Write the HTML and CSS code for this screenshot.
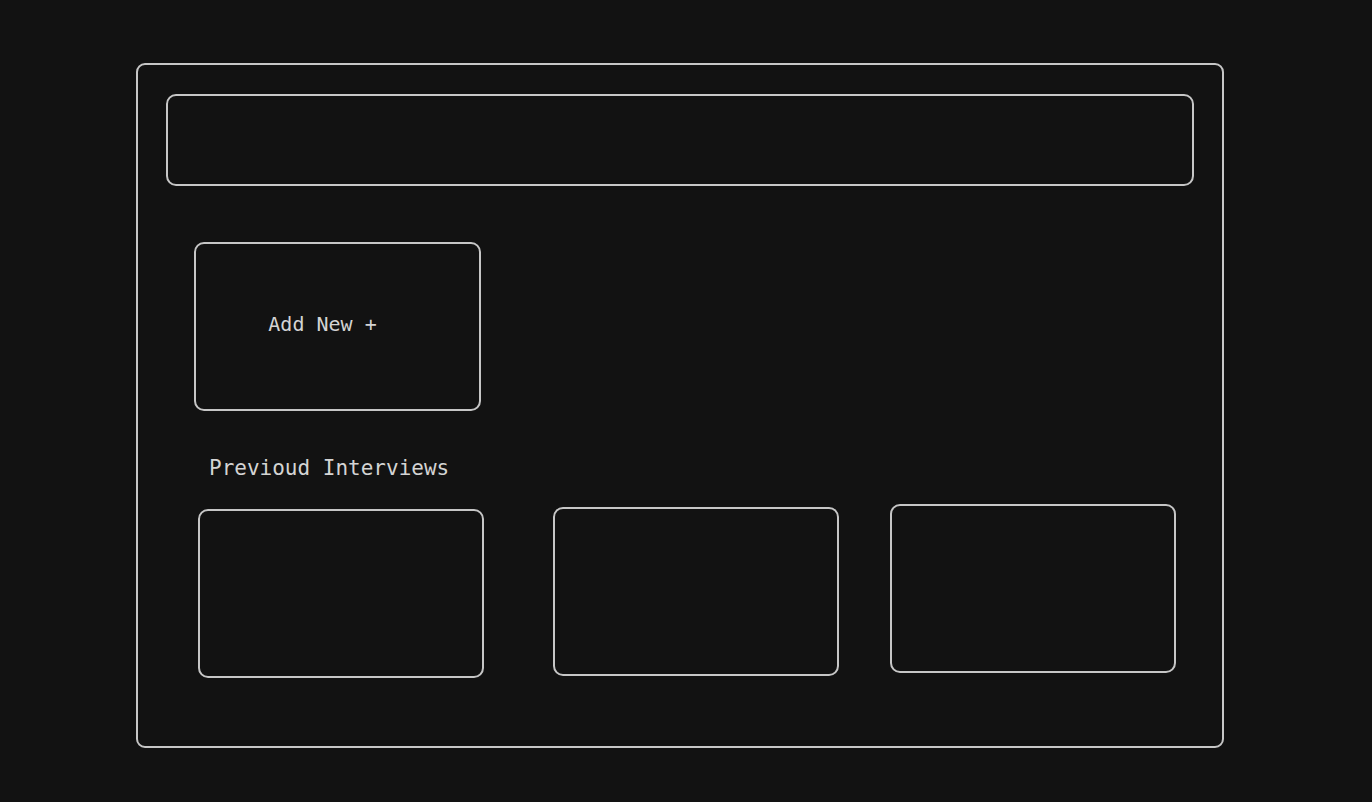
FILE: index.html
```html
<!DOCTYPE html>
<html>
<head>
<meta charset="utf-8">
<link rel="stylesheet" href="styles.css">
</head>
<body>
<div class="frame">
  <div class="header"></div>
  <div class="add-card"><span>Add New +</span></div>
  <div class="section-title">Previoud Interviews</div>
  <div class="cards">
    <div class="card card-1"></div>
    <div class="card card-2"></div>
    <div class="card card-3"></div>
  </div>
</div>
</body>
</html>
```
FILE: styles.css
```css
html, body {
  margin: 0;
  padding: 0;
  background: #121212;
}
body {
  width: 1372px;
  height: 802px;
  overflow: hidden;
  font-family: "DejaVu Sans Mono", "Liberation Mono", monospace;
  color: #d4d4d4;
}
.frame {
  box-sizing: border-box;
  margin: 63px 0 0 136px;
  width: 1088px;
  height: 685px;
  border: 2px solid #c6c6c6;
  border-radius: 9px;
  padding: 29px 28px 0 28px;
}
.header {
  box-sizing: border-box;
  height: 92px;
  border: 2px solid #c6c6c6;
  border-radius: 10px;
}
.add-card {
  box-sizing: border-box;
  margin: 56px 0 0 28px;
  width: 287px;
  height: 169px;
  border: 2px solid #c6c6c6;
  border-radius: 10px;
  display: flex;
  align-items: center;
  justify-content: center;
  padding: 0 30px 6px 0;
  font-size: 20px;
  line-height: 24px;
}
.section-title {
  margin: 45px 0 0 43px;
  font-size: 21px;
  line-height: 24px;
}
.cards {
  display: flex;
  align-items: flex-start;
  margin-top: 24px;
}
.card {
  box-sizing: border-box;
  width: 286px;
  height: 169px;
  border: 2px solid #c6c6c6;
  border-radius: 10px;
}
.card-1 { margin: 5px 0 0 32px; }
.card-2 { margin: 3px 0 0 69px; }
.card-3 { margin: 0 0 0 51px; }
```
